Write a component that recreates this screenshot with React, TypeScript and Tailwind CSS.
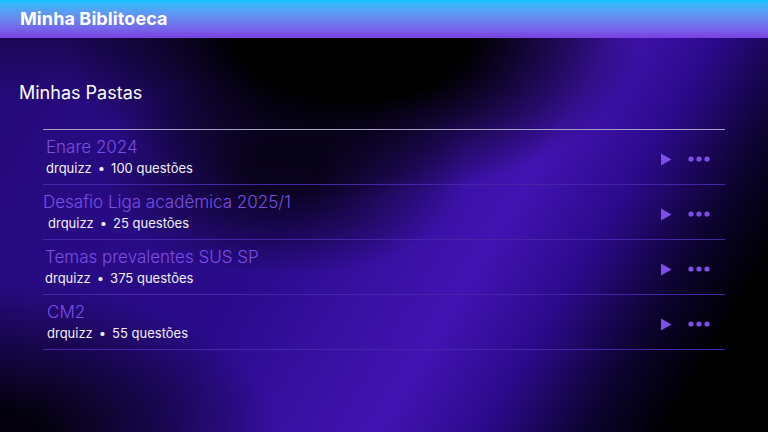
import React from 'react';

interface Folder {
  id: string;
  name: string;
  owner: string;
  count: number;
  nudge: string;
  subNudge: string;
}

const folders: Folder[] = [
  { id: '1', name: 'Enare 2024', owner: 'drquizz', count: 100, nudge: 'ml-[3px]', subNudge: 'ml-[3px]' },
  { id: '2', name: 'Desafio Liga acadêmica 2025/1', owner: 'drquizz', count: 25, nudge: 'ml-0', subNudge: 'ml-[5px]' },
  { id: '3', name: 'Temas prevalentes SUS SP', owner: 'drquizz', count: 375, nudge: 'ml-[2px]', subNudge: 'ml-[2px]' },
  { id: '4', name: 'CM2', owner: 'drquizz', count: 55, nudge: 'ml-[4px]', subNudge: 'ml-[4px]' },
];

function PlayIcon() {
  return (
    <svg width="12" height="13" viewBox="0 0 12 13" className="text-[#7d4fe6]">
      <path d="M1 0.5 L11.5 6.5 L1 12.5 Z" fill="currentColor" />
    </svg>
  );
}

function DotsIcon() {
  return (
    <svg width="22" height="6" viewBox="0 0 22 6" className="text-[#7d4fe6]">
      <circle cx="3" cy="3" r="2.6" fill="currentColor" />
      <circle cx="11" cy="3" r="2.6" fill="currentColor" />
      <circle cx="19" cy="3" r="2.6" fill="currentColor" />
    </svg>
  );
}

export default function App() {
  return (
    <div
      className="relative w-full h-[432px] overflow-hidden bg-black text-white font-['Inter','Noto_Sans',sans-serif]
        bg-[radial-gradient(ellipse_38%_38%_at_46%_8%,#000_40%,transparent_100%),radial-gradient(ellipse_24%_24%_at_37%_40%,rgba(0,0,0,0.75)_20%,transparent_100%),radial-gradient(ellipse_36%_34%_at_0%_100%,rgba(0,0,0,0.9)_15%,transparent_100%),radial-gradient(ellipse_30%_20%_at_6%_4%,rgba(0,0,0,0.4),transparent),linear-gradient(121deg,#250a78_0%,#2a0b8c_40%,#4213b2_62%,#2c0a8c_72%,#0c0330_82%,#000_90%)]"
    >
      <header className="h-[38px] flex items-center px-5 bg-gradient-to-b from-[#05c2fd] to-[#7a43e2] border-b border-[#7a44e0]">
        <h1 className="text-[18px] font-bold tracking-[0.1px]">Minha Biblitoeca</h1>
      </header>

      <main className="pt-[43px]">
        <h2 className="px-[19px] text-[18px] font-normal leading-[24px]">Minhas Pastas</h2>

        <ul className="mt-[24px] ml-[43px] mr-[43px] border-t border-[#a6a1c4]">
          {folders.map((folder) => (
            <li
              key={folder.id}
              className="h-[55px] flex items-center justify-between border-b border-[#4424a8]"
            >
              <div className="flex flex-col pb-[3px]">
                <span className={`text-[17px] font-light leading-[24px] text-[#7c4fe4] ${folder.nudge}`}>
                  {folder.name}
                </span>
                <span className={`text-[13px] leading-[18px] text-[#f2f0f8] ${folder.subNudge}`}>
                  {folder.owner}
                  <span className="mx-[6px]">•</span>
                  {folder.count} questões
                </span>
              </div>
              <div className="flex items-center gap-[16px] pr-[15px] pt-[4px]">
                <button title="Jogar" className="flex items-center">
                  <PlayIcon />
                </button>
                <button title="Mais opções" className="flex items-center">
                  <DotsIcon />
                </button>
              </div>
            </li>
          ))}
        </ul>
      </main>
    </div>
  );
}
